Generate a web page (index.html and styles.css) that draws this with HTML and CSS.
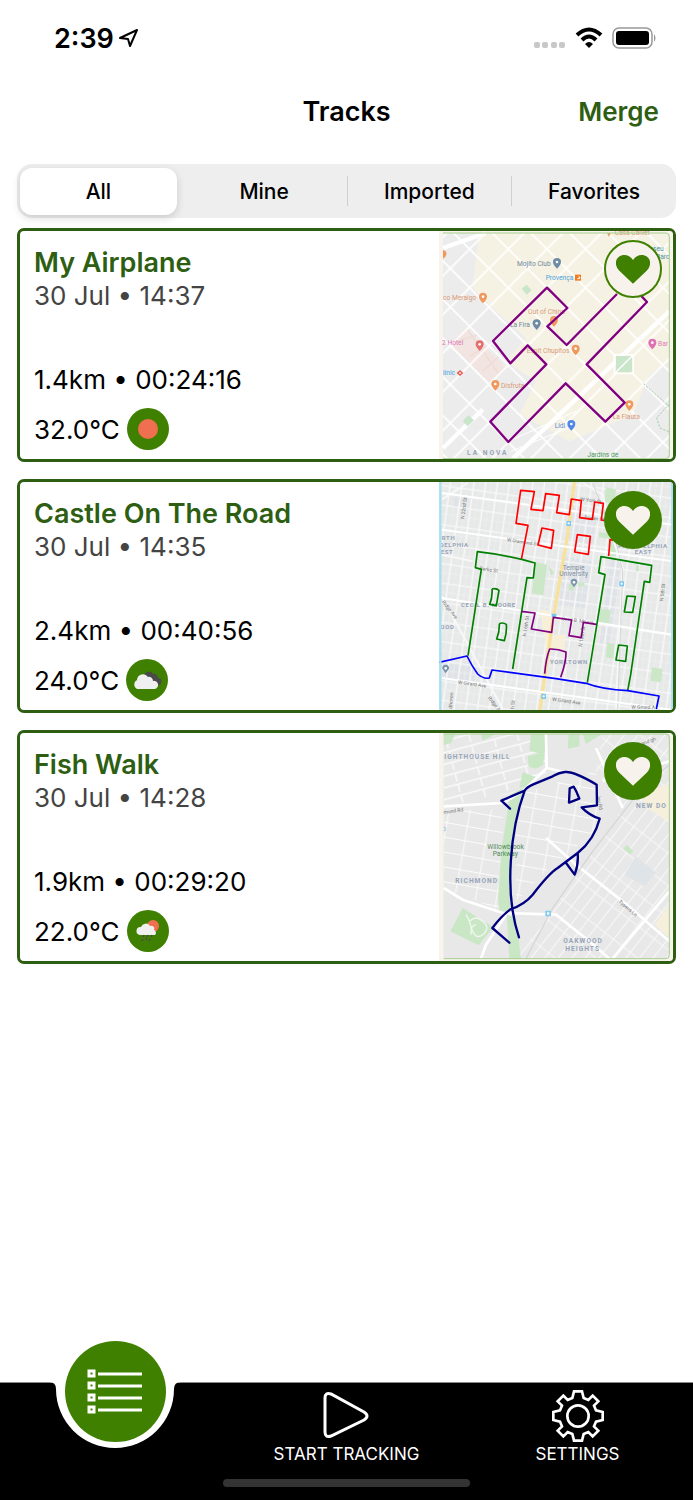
FILE: index.html
```
<!DOCTYPE html>
<html lang="en">
<head>
    <meta charset="UTF-8">
    <meta name="viewport" content="width=device-width, initial-scale=1.0">
    <title>Tracks</title>
    <link rel="stylesheet" href="styles.css">
</head>
<body>

    <div class="status-bar">
        <div class="status-time">
            <span>2:39</span>
            <svg width="20" height="20" viewBox="0 0 20 20"><path d="M1 10 L18 2 L11 18 L9 11 Z" fill="none" stroke="#000" stroke-width="2" stroke-linejoin="round"/></svg>
        </div>
        <div class="status-icons">
            <svg width="32" height="22" viewBox="0 0 32 22" fill="#c8c8c8">
                <rect x="0" y="15" width="6" height="6" rx="2"/>
                <rect x="8" y="15" width="6" height="6" rx="2"/>
                <rect x="17" y="15" width="6" height="6" rx="2"/>
                <rect x="25" y="15" width="6" height="6" rx="2"/>
            </svg>
            <svg width="28" height="22" viewBox="0 0 28 22">
                <path d="M2 8 Q14 -3 26 8" fill="none" stroke="#000" stroke-width="4"/>
                <path d="M7 13 Q14 6 21 13" fill="none" stroke="#000" stroke-width="4"/>
                <path d="M10 17 Q14 13 18 17 L14 21 Z"/>
            </svg>
            <svg width="45" height="22" viewBox="0 0 45 22">
                <rect x="1" y="1" width="39" height="20" rx="6" fill="#fff" stroke="#999" stroke-width="1.5"/>
                <rect x="4" y="4" width="33" height="14" rx="3"/>
                <path d="M42 7 Q45 11 42 15 Z" fill="#999"/>
            </svg>
        </div>
    </div>

    <header class="nav-bar">
        <h1>Tracks</h1>
        <button class="merge-btn" type="button">Merge</button>
    </header>

    <div class="filters">
        <button class="filter active" type="button">All</button>
        <button class="filter" type="button">Mine</button>
        <button class="filter" type="button">Imported</button>
        <button class="filter" type="button">Favorites</button>
    </div>

    <main class="tracks">

        <article class="track">
            <div class="track-info">
                <h2>My Airplane</h2>
                <p class="date">30 Jul • 14:37</p>
                <p class="stats">1.4km • 00:24:16</p>
                <div class="weather">
                    <span>32.0°C</span>
                    <svg width="42" height="42" viewBox="0 0 42 42">
                        <circle cx="21" cy="21" r="21" fill="#408000"/>
                        <circle cx="21" cy="21" r="10" fill="#ef6f50"/>
                    </svg>
                </div>
            </div>
            <div class="track-map">
                <svg class="map" viewBox="9 9 702 684">
                    <defs>
                        <pattern id="blocks" width="82" height="82" patternUnits="userSpaceOnUse" patternTransform="rotate(45)">
                            <path d="M34 0 V82 M0 55 H82" stroke="#fff" stroke-width="5"/>
                        </pattern>
                    </defs>
                    <rect x="9" y="9" width="702" height="684" fill="#f8f4ec"/>
                    <rect x="21" y="15" width="679" height="677" fill="#ececed"/>
                    <path d="M130 15 H700 V400 L640 440 L590 560 L400 640 L330 600 L250 560 L300 460 L210 400 L270 330 L180 250 L110 180 Z" fill="#f6f2e3"/>
                    <path d="M90 300 L210 420 L160 462 L42 345 Z" fill="#f2e4e0"/>
                    <path d="M95 305 L190 440 M60 340 L130 320 M100 385 L160 350 M140 430 L190 385" stroke="#eedbd6" stroke-width="4" fill="none"/>
                    <rect x="21" y="15" width="679" height="677" fill="url(#blocks)"/>
                    <path d="M21 60 L150 15 M230 692 L700 250 M21 660 L140 545" stroke="#fff" stroke-width="13"/>
                    <path d="M217 640 L420 550 M225 670 L420 590 M217 640 L360 500" stroke="#fff" stroke-width="3"/>
                    <path d="M272 170 L287 187 L272 200 L257 182 Z M97 561 L114 577 L95 595 L80 580 Z M540 384 H588 V432 H540 Z" fill="#c9e6cb"/>
                    <path d="M535 380 H592 V437 H535 Z M535 437 L592 380" fill="none" stroke="#fff" stroke-width="4"/>
                    <path d="M622 467 L700 535 M700 528 L662 570 L672 600 L700 612" fill="none" stroke="#a5cdb0" stroke-width="3" stroke-dasharray="7 4"/>
                    <g class="pins">
                        <path id="pin" d="M363 90 a12 12 0 0 1 12 12 q0 8 -12 20 q-12 -12 -12 -20 a12 12 0 0 1 12 -12" fill="#6e8ba5"/>
                        <use href="#pin" x="-61" y="184"/>
                        <path d="M141 194 a12 12 0 0 1 12 12 q0 8 -12 20 q-12 -12 -12 -20 a12 12 0 0 1 12 -12 M354 264 a12 12 0 0 1 12 12 q0 8 -12 20 q-12 -12 -12 -20 a12 12 0 0 1 12 -12 M419 350 a12 12 0 0 1 12 12 q0 8 -12 20 q-12 -12 -12 -20 a12 12 0 0 1 12 -12 M178 456 a12 12 0 0 1 12 12 q0 8 -12 20 q-12 -12 -12 -20 a12 12 0 0 1 12 -12 M580 517 a12 12 0 0 1 12 12 q0 8 -12 20 q-12 -12 -12 -20 a12 12 0 0 1 12 -12 M21 66 q12 2 10 14 q-2 8 -10 12 Z M513 15 h11 l-5 12 Z" fill="#f0995f"/>
                        <path d="M131 337 a12 12 0 0 1 12 12 q0 8 -12 20 q-12 -12 -12 -20 a12 12 0 0 1 12 -12" fill="#e56f6f"/>
                        <path d="M649 332 a12 12 0 0 1 12 12 q0 8 -12 20 q-12 -12 -12 -20 a12 12 0 0 1 12 -12" fill="#e070b4"/>
                        <path d="M406 576 a12 12 0 0 1 12 12 q0 8 -12 20 q-12 -12 -12 -20 a12 12 0 0 1 12 -12" fill="#5086e8"/>
                    </g>
                    <g fill="#fff">
                        <circle cx="363" cy="102" r="4"/><circle cx="302" cy="286" r="4"/><circle cx="141" cy="206" r="4"/>
                        <circle cx="354" cy="276" r="4"/><circle cx="419" cy="362" r="4"/><circle cx="178" cy="468" r="4"/>
                        <circle cx="580" cy="529" r="4"/><circle cx="131" cy="349" r="4"/><circle cx="649" cy="344" r="4"/><circle cx="406" cy="588" r="4"/>
                    </g>
                    <rect x="417" y="140" width="18" height="18" fill="#f47b20"/>
                    <path d="M424 152 h7 v-5 h-4" fill="none" stroke="#fff" stroke-width="3"/>
                    <path d="M72 429 l7 6 l-7 6 l-7 -6 Z" fill="none" stroke="#e8574e" stroke-width="4"/>
                    <g class="place">
                        <text x="243" y="114" fill="#7088a0">Mojito Club</text>
                        <text x="329" y="156" fill="#4aa3dd">Provença</text>
                        <text x="21" y="217" fill="#d99a78">co Meraigo</text>
                        <text x="276" y="257" fill="#d99a78">Out of China</text>
                        <text x="222" y="298" fill="#7088a0">La Fira</text>
                        <text x="18" y="350" fill="#e27ab8">2 Hotel</text>
                        <text x="272" y="374" fill="#d99a78">Espit Chupitos</text>
                        <text x="666" y="354" fill="#e27ab8">Bar</text>
                        <text x="21" y="442" fill="#4aa3dd">línic</text>
                        <text x="195" y="480" fill="#d99a78">Disfruta</text>
                        <text x="530" y="574" fill="#d99a78">La Flauta</text>
                        <text x="356" y="599" fill="#5b8fd8">Lidl</text>
                        <text x="640" y="70" fill="#4d94a8">useu</text>
                        <text x="660" y="92" fill="#4d94a8">Barc</text>
                        <text x="454" y="687" fill="#4f9a5c">Jardins de</text>
                        <text x="536" y="22" fill="#d99a78">Casa Calvet</text>
                    </g>
                    <text class="area wide" x="93" y="680">LA NOVA</text>
                    <path d="M543 198 L392 351 L334 295 L394 240 L333 179 L171 339 L223 406 L275 352 L331 409 L163 581 L217 642 L389 466 L508 581 L566 524 L452 409 L633 222 L612 200" fill="none" stroke="#800080" stroke-width="7" stroke-linejoin="round"/>
                    <path d="M21 15 H690 Q700 15 700 27 V680 Q700 692 690 692 H21" fill="none" stroke="#a5cf8e" stroke-width="3"/>
                </svg>
                <button class="fav outline" type="button" aria-label="Favorite">
                    <svg width="34" height="29" viewBox="0 0 102 87"><path d="M51 86 L10 47 C-4 33 -3 14 8 6 C22 -4 40 -1 51 15 C62 -1 80 -4 94 6 C105 14 106 33 92 47 Z" fill="currentColor"/></svg>
                </button>
            </div>
        </article>

        <article class="track">
            <div class="track-info">
                <h2>Castle On The Road</h2>
                <p class="date">30 Jul • 14:35</p>
                <p class="stats">2.4km • 00:40:56</p>
                <div class="weather">
                    <span>24.0°C</span>
                    <svg width="42" height="42" viewBox="0 0 42 42">
                        <circle cx="21" cy="21" r="21" fill="#408000"/>
                        <path d="M18 16 a5 5 0 0 1 9 -1 a4 4 0 0 1 5 4 a3 3 0 0 1 0 7 Z" fill="#4a4a4a"/>
                        <path d="M11 30 a5 5 0 0 1 0 -9 a6 6 0 0 1 11 -3 a4 4 0 0 1 5 4 a4 4 0 0 1 2 8 Z" fill="#f0f0f0"/>
                    </svg>
                </div>
            </div>
            <div class="track-map">
                <svg class="map" viewBox="9 12 702 684">
                    <defs>
                        <pattern id="streets" width="35" height="58" patternUnits="userSpaceOnUse" patternTransform="rotate(8)">
                            <path d="M10 0 V58 M0 20 H35" stroke="#f9f9f9" stroke-width="4"/>
                            <path d="M0 46 H35 M27 0 V58" stroke="#f1f1f1" stroke-width="2"/>
                        </pattern>
                    </defs>
                    <rect x="9" y="12" width="702" height="684" fill="#e7e8e8"/>
                    <path d="M380 235 L470 250 L450 390 L370 380 Z M520 240 L560 240 L520 500 L490 500 Z M50 50 h40 v40 h-40 Z M17 560 L110 550 L120 620 L17 610 Z M400 80 L480 130 L470 200 L390 180 Z" fill="#dfe3e7"/>
                    <rect x="9" y="12" width="702" height="684" fill="url(#streets)"/>
                    <path d="M312 395 L345 400 L345 470 L390 470 L385 515 L330 510 Z" fill="#f8efd8"/>
                    <path d="M297 252 L333 260 L322 352 L288 346 Z M510 28 L540 34 L535 78 L505 72 Z M490 162 L545 170 L540 235 L520 235 L520 182 L488 178 Z M493 392 L524 396 L519 440 L489 435 Z M514 495 L536 498 L532 542 L509 538 Z M648 568 L680 573 L675 613 L643 608 Z M336 262 L355 285 L345 292 Z M400 318 l16 4 l-4 18 l-14 -4 Z M425 313 h20 v12 h-20 Z M601 262 h8 v18 h-10 Z" fill="#cbe7c8"/>
                    <path d="M17 355 L90 490 L200 693 M17 65 L95 15 M17 230 L110 250 M440 15 L500 50 L530 180 L560 270 L540 693" fill="none" stroke="#f8f8f8" stroke-width="6"/>
                    <path d="M470 15 L540 190 L560 280 L545 693" fill="none" stroke="#d3d5d8" stroke-width="3"/>
                    <path d="M415 12 L395 170 L350 430 L312 696" fill="none" stroke="#f8e19c" stroke-width="10"/>
                    <path d="M17 45 L711 140 M17 155 L711 250 M17 360 L711 470 M17 600 L711 696" fill="none" stroke="#fff" stroke-width="6"/>
                    <g fill="#76c6ef">
                        <rect x="391" y="129" width="14" height="15" rx="2"/><rect x="550" y="310" width="14" height="15" rx="2"/>
                        <rect x="347" y="407" width="14" height="10" rx="2"/><rect x="316" y="648" width="14" height="15" rx="2"/>
                    </g>
                    <g fill="#fff"><rect x="395" y="133" width="6" height="6"/><rect x="554" y="314" width="6" height="6"/><rect x="320" y="652" width="6" height="6"/></g>
                    <path d="M414 302 a11 11 0 0 1 10 12 l-10 14 l-10 -14 a11 11 0 0 1 10 -12 M29 560 a11 11 0 0 1 10 12 l-10 14 l-10 -14 a11 11 0 0 1 10 -12" fill="#7a95aa"/>
                    <circle cx="414" cy="313" r="4" fill="#fff"/><circle cx="29" cy="571" r="4" fill="#fff"/>
                    <g class="area narrow">
                        <text x="17" y="187">RTH</text>
                        <text x="11" y="208">DELPHIA</text>
                        <text x="14" y="227">EST</text>
                        <text x="546" y="209">PHILADELPHIA</text>
                        <text x="596" y="229">EAST</text>
                        <text x="75" y="388">CECIL B. MOORE</text>
                        <text x="13" y="454">OOD</text>
                        <text x="342" y="558">YORKTOWN</text>
                    </g>
                    <g class="street">
                        <text transform="translate(84 124) rotate(-82)">N 22nd St</text>
                        <text transform="translate(212 190) rotate(8)">W Diamond St</text>
                        <text transform="translate(130 276) rotate(8)">Berks St</text>
                        <text transform="translate(432 68) rotate(8)">W York St</text>
                        <text transform="translate(445 122) rotate(8)">Susan St</text>
                        <text transform="translate(376 426) rotate(8)">Cecil B. Moore</text>
                        <text transform="translate(270 476) rotate(-82)">N 16th St</text>
                        <text transform="translate(438 507) rotate(-82)">N 12th St</text>
                        <text transform="translate(682 370) rotate(-84)">N 5th St</text>
                        <text transform="translate(17 372) rotate(52)">Ridge Ave</text>
                        <text transform="translate(65 617) rotate(8)">W Girard Ave</text>
                        <text transform="translate(348 668) rotate(8)">W Girard Ave</text>
                        <text transform="translate(155 660) rotate(52)">Ridge A</text>
                        <text transform="translate(48 692) rotate(-86)">dhoven</text>
                        <text transform="translate(586 692) rotate(1)">W Girard A</text>
                        <text transform="translate(235 693) rotate(-86)">h St</text>
                    </g>
                    <g class="place" fill="#7f90a3" text-anchor="middle">
                        <text x="413" y="276">Temple</text>
                        <text x="413" y="294">University</text>
                    </g>
                    <g fill="none" stroke-width="5" stroke-linejoin="round">
                        <path d="M256 245 L276 142 L240 136 L254 37 L295 41 L285 94 L321 98 L329 47 L370 52 L362 104 L400 110 L406 63 L436 68 L431 119 L469 124 L476 72 L502 76 L496 126 L520 129 M318 150 L353 157 L346 211 L306 201 Z M424 170 L463 175 L457 229 L416 222 Z M518 234 L522 185 L545 188" stroke="#ff0000"/>
                        <path d="M96 533 L136 274 L118 269 L124 221 Q220 232 297 255 L292 300 L273 299 L230 573 M454 614 L507 290 L488 284 L495 236 L647 262 L641 313 L625 310 L584 590 L575 638 M168 333 Q180 329 189 337 L181 383 L161 379 Q170 358 168 333 M190 437 Q200 432 211 439 Q213 462 205 488 L182 483 Q191 462 190 437 M573 354 L598 356 L590 403 L565 402 Z M548 501 L574 504 L569 550 L540 546 Z" stroke="#008000"/>
                        <path d="M256 400 L297 405 L286 453 L347 463 L352 418 L407 426 L399 473 L436 479 L442 433 L481 439 M326 587 Q330 540 341 513 Q365 512 390 522 Q391 550 374 598" stroke="#800080"/>
                        <path d="M9 553 L93 534 Q108 565 125 588 Q143 604 160 600 L168 576 L360 602 L450 616 Q500 635 575 638 L669 654 L661 693" stroke="#0000ff"/>
                    </g>
                    <path d="M13 12 V696 M709 12 V696" stroke="#a9dff0" stroke-width="7"/>
                </svg>
                <button class="fav" type="button" aria-label="Favorite">
                    <svg width="34" height="29" viewBox="0 0 102 87"><path d="M51 86 L10 47 C-4 33 -3 14 8 6 C22 -4 40 -1 51 15 C62 -1 80 -4 94 6 C105 14 106 33 92 47 Z" fill="currentColor"/></svg>
                </button>
            </div>
        </article>

        <article class="track">
            <div class="track-info">
                <h2>Fish Walk</h2>
                <p class="date">30 Jul • 14:28</p>
                <p class="stats">1.9km • 00:29:20</p>
                <div class="weather">
                    <span>22.0°C</span>
                    <svg width="42" height="42" viewBox="0 0 42 42">
                        <circle cx="21" cy="21" r="21" fill="#408000"/>
                        <circle cx="26" cy="16" r="6" fill="#ef6f50"/>
                        <path d="M13 25 a4 4 0 0 1 1 -8 a5 5 0 0 1 9 -1 a3 3 0 0 1 4 4 a3 3 0 0 1 1 5 Z" fill="#f0f0f0"/>
                        <path d="M17 25 l-1 2 M21 25 l-1 2 M25 25 l-1 2 M16 29 l-1 2 M20 28 l-1 2 M23 29 l-1 2" stroke="#4a4a4a" stroke-width="1.5"/>
                    </svg>
                </div>
            </div>
            <div class="track-map">
                <svg class="map" viewBox="9 15 702 684">
                    <defs>
                        <pattern id="north" width="70" height="34" patternUnits="userSpaceOnUse" patternTransform="rotate(-15)">
                            <path d="M0 10 H70 M20 10 V34" stroke="#fbfbfb" stroke-width="4"/>
                        </pattern>
                        <pattern id="middle" width="62" height="44" patternUnits="userSpaceOnUse" patternTransform="rotate(10)">
                            <path d="M0 10 H62 M20 0 V44" stroke="#fbfbfb" stroke-width="3"/>
                        </pattern>
                        <pattern id="south" width="32" height="76" patternUnits="userSpaceOnUse" patternTransform="rotate(38)">
                            <path d="M10 0 V76 M0 20 H32" stroke="#f8f8f8" stroke-width="3"/>
                        </pattern>
                    </defs>
                    <rect x="9" y="15" width="702" height="684" fill="#f8f4ec"/>
                    <rect x="23" y="18" width="677" height="674" fill="#e8e8e8"/>
                    <path d="M23 18 H330 V150 L260 190 L23 235 Z" fill="url(#north)"/>
                    <path d="M23 245 H200 V550 L23 480 Z M240 200 L480 130 L490 300 L330 430 L240 520 Z" fill="url(#middle)"/>
                    <path d="M500 18 H700 V692 H240 L400 470 L560 240 L480 130 Z" fill="url(#south)"/>
                    <path d="M23 18 H58 L45 45 L23 52 Z M135 18 H180 L140 38 Z M285 18 H335 L325 80 L280 68 Z M275 85 L325 72 L322 110 L300 122 L278 116 Z M260 132 L300 148 L280 175 L250 180 Z M222 200 L260 180 L255 225 L232 340 L222 550 L190 550 L186 510 L196 370 Z M212 560 L240 570 L255 693 L220 693 Z M80 540 L172 598 L128 652 L43 610 Z M398 18 H430 V55 L395 62 Z M440 18 H498 L450 48 Z M572 350 L592 370 L582 380 L562 362 Z" fill="#c9e7c5"/>
                    <path d="M600 385 L660 435 L625 475 L565 440 Z" fill="#dfe4e8"/>
                    <path d="M700 530 V630 L655 590 Z M600 190 L700 170 V280 L640 245 Z" fill="#f6efdc"/>
                    <path d="M23 235 L200 225 L260 190 M330 18 L332 120 L260 190 M332 120 L395 135 M23 480 L80 515 L200 555 L360 560 L460 640 L520 692 M330 330 L420 410 L560 520 L700 640 M530 692 L700 490 M210 560 L150 650 L135 692 M480 60 L560 240 M500 160 L700 100" fill="none" stroke="#fff" stroke-width="8"/>
                    <path d="M270 692 L350 540 L470 370 L610 190 L700 110" fill="none" stroke="#d5d6d8" stroke-width="4"/>
                    <path d="M100 580 q20 -20 40 0 q25 20 0 40 q-20 15 -30 -10 q-10 -15 10 -20 M90 560 q20 30 15 60" fill="none" stroke="#f1f7ef" stroke-width="4"/>
                    <rect x="328" y="548" width="17" height="17" rx="2" fill="#84c9ef"/>
                    <rect x="333" y="553" width="7" height="7" fill="#fff"/>
                    <path d="M23 298 h5 v10 h-5" fill="none" stroke="#7fbdd8" stroke-width="2"/>
                    <g class="area">
                        <text x="25" y="93">IGHTHOUSE HILL</text>
                        <text x="600" y="240">NEW DO</text>
                        <text x="58" y="464">RICHMOND</text>
                        <text x="382" y="645">OAKWOOD</text>
                        <text x="388" y="668">HEIGHTS</text>
                    </g>
                    <g class="street">
                        <text transform="translate(23 258) rotate(-8)">mond Rd</text>
                        <text transform="translate(547 523) rotate(40)">Tysens Ln</text>
                        <text transform="translate(482 207) rotate(78)">ley Rd</text>
                        <text transform="translate(618 52) rotate(-20)">and gh</text>
                    </g>
                    <g class="place" fill="#528a55">
                        <text x="154" y="364">Willowbrook</text>
                        <text x="170" y="385">Parkway</text>
                    </g>
                    <path d="M222 242 L196 218 L266 188 C225 300 202 490 249 628 M220 644 L169 600 Q195 565 223 544 Q265 530 290 500 Q340 435 365 420 L425 375 Q475 335 491 272 Q460 262 437 238 L483 232 L482 170 Q415 130 388 132 Q370 133 350 145 L290 170 Q272 178 266 188 M425 375 Q428 410 416 440 L388 402 M401 181 L413 176 Q422 190 430 212 L399 224 Z" fill="none" stroke="#000080" stroke-width="7" stroke-linejoin="round" stroke-linecap="round"/>
                    <path d="M23 18 H690 Q700 18 700 30 V680 Q700 692 690 692 H23" fill="none" stroke="#a5cf8e" stroke-width="3"/>
                </svg>
                <button class="fav" type="button" aria-label="Favorite">
                    <svg width="34" height="29" viewBox="0 0 102 87"><path d="M51 86 L10 47 C-4 33 -3 14 8 6 C22 -4 40 -1 51 15 C62 -1 80 -4 94 6 C105 14 106 33 92 47 Z" fill="currentColor"/></svg>
                </button>
            </div>
        </article>

    </main>

    <nav class="tab-bar">
        <div class="tabs">
            <a class="tab selected" href="#tracks" aria-label="Tracks">
                <svg class="notch" width="132" height="66" viewBox="0 0 132 66"><path d="M0 0 Q7 0 7 7 A59 59 0 0 0 125 7 Q125 0 132 0 Z" fill="#fff"/></svg>
                <span class="tab-circle">
                    <svg width="56" height="46" viewBox="0 0 56 46" stroke="#fff" stroke-width="3" fill="none">
                        <path d="M11 5 H55 M11 17 H55 M11 29 H55 M11 41 H55"/>
                        <path d="M2 2 h5 v5 h-5 Z M2 14 h5 v5 h-5 Z M2 26 h5 v5 h-5 Z M2 38 h5 v5 h-5 Z"/>
                    </svg>
                </span>
            </a>
            <a class="tab" href="#start">
                <svg width="52" height="52" viewBox="0 0 52 52"><path d="M4 8 Q4 2 10 4 L43 22 Q49 26 43 30 L10 46 Q4 48 4 42 Z" fill="none" stroke="#fff" stroke-width="3"/></svg>
                <span>START TRACKING</span>
            </a>
            <a class="tab" href="#settings">
                <svg width="52" height="52" viewBox="-78 -78 156 156" fill="none" stroke="#fff" stroke-width="8">
                    <path d="M-12 -74 L12 -74 L17 -54 L31 -48 L44 -61 L61 -44 L48 -31 L54 -17 L74 -12 L74 12 L54 17 L48 31 L61 44 L44 61 L31 48 L17 54 L12 74 L-12 74 L-17 54 L-31 48 L-44 61 L-61 44 L-48 31 L-54 17 L-74 12 L-74 -12 L-54 -17 L-48 -31 L-61 -44 L-44 -61 L-31 -48 L-17 -54 Z"/>
                    <circle r="32"/>
                </svg>
                <span>SETTINGS</span>
            </a>
        </div>
        <div class="home-indicator"></div>
    </nav>

</body>
</html>
```

FILE: styles.css
```
* {
    box-sizing: border-box;
}

body {
    margin: 0;
    min-height: 100vh;
    display: flex;
    flex-direction: column;
    font-family: Inter, "Liberation Sans", sans-serif;
    background-color: #fff;
    color: #000;
}

h1, h2, p {
    margin: 0;
}

svg {
    display: block;
}

button {
    font-family: inherit;
    border: none;
    padding: 0;
    cursor: pointer;
}

/* status bar */
.status-bar {
    height: 76px;
    padding: 0 36px 0 54px;
    display: flex;
    justify-content: space-between;
    align-items: center;
}

.status-time {
    display: flex;
    align-items: center;
    gap: 5px;
    font-size: 27px;
    font-weight: 600;
}

.status-icons {
    display: flex;
    align-items: center;
    gap: 9px;
}

/* header */
.nav-bar {
    height: 70px;
    padding: 0 34px;
    display: grid;
    grid-template-columns: 1fr auto 1fr;
    align-items: center;
}

.nav-bar h1 {
    grid-column: 2;
    font-size: 27px;
    font-weight: 600;
}

.merge-btn {
    justify-self: end;
    background: none;
    color: #2d5e12;
    font-size: 26px;
    font-weight: 600;
}

/* filter */
.filters {
    margin: 18px 17px 10px;
    height: 54px;
    display: grid;
    grid-template-columns: repeat(4, 1fr);
    align-items: center;
    border-radius: 15px;
    background-color: #eeeeef;
}

.filter {
    height: 30px;
    background: none;
    font-size: 21px;
    font-weight: 500;
    color: #000;
}

.filter + .filter + .filter {
    border-left: 1px solid #cfcfd1;
}

.filter.active {
    height: 47px;
    margin: 0 5px 0 3px;
    border-radius: 12px;
    background-color: #fff;
    box-shadow: 0 3px 8px rgba(0, 0, 0, 0.15);
}

/* tracks */
.tracks {
    flex: 1;
    padding: 0 17px 24px;
    display: flex;
    flex-direction: column;
    gap: 17px;
}

.track {
    display: flex;
    justify-content: space-between;
    border: 3px solid #2d5e12;
    border-radius: 7px;
    overflow: hidden;
}

.track-info {
    padding: 15px 14px 9px;
    display: flex;
    flex-direction: column;
    font-size: 26px;
    line-height: 33px;
}

.track-info h2 {
    font-size: 27px;
    font-weight: 600;
    color: #2d5e12;
}

.date {
    color: #444;
}

.stats {
    margin-top: auto;
}

.weather {
    margin-top: 12px;
    display: flex;
    align-items: center;
    gap: 7px;
}

.track-map {
    position: relative;
    width: 234px;
    height: 228px;
}

.map {
    width: 100%;
    height: 100%;
}

.map text {
    font-family: Roboto, sans-serif;
}

.place {
    font-size: 20px;
}

.area {
    font-size: 20px;
    font-weight: 700;
    letter-spacing: 3px;
    fill: #97a5b8;
}

.area.narrow {
    font-size: 18px;
    letter-spacing: 2px;
}

.area.wide {
    letter-spacing: 6px;
}

.street {
    font-size: 15px;
    fill: #777;
}

.fav {
    position: absolute;
    top: 9px;
    right: 11px;
    width: 58px;
    height: 58px;
    border-radius: 50%;
    display: flex;
    justify-content: center;
    align-items: center;
    background-color: #408000;
    color: #f7f3ec;
}

.fav.outline {
    border: 2px solid #408000;
    background-color: #f7f3ec;
    color: #408000;
}

/* tab bar */
.tab-bar {
    height: 118px;
    padding-bottom: 13px;
    display: flex;
    flex-direction: column;
    justify-content: space-between;
    align-items: center;
    background-color: #000;
    border-top: 1px solid #888;
}

.tabs {
    width: 100%;
    display: grid;
    grid-template-columns: repeat(3, 1fr);
}

.tab {
    position: relative;
    padding-top: 7px;
    display: flex;
    flex-direction: column;
    align-items: center;
    color: #fff;
    font-size: 17px;
    line-height: 24px;
    text-decoration: none;
}

.notch {
    position: absolute;
    top: -1px;
    left: calc(50% - 67px);
}

.tab-circle {
    position: absolute;
    top: -42px;
    left: calc(50% - 51px);
    width: 101px;
    height: 101px;
    border-radius: 50%;
    display: flex;
    justify-content: center;
    align-items: center;
    background-color: #408000;
}

.home-indicator {
    width: 247px;
    height: 8px;
    border-radius: 4px;
    background-color: #333;
}
```
